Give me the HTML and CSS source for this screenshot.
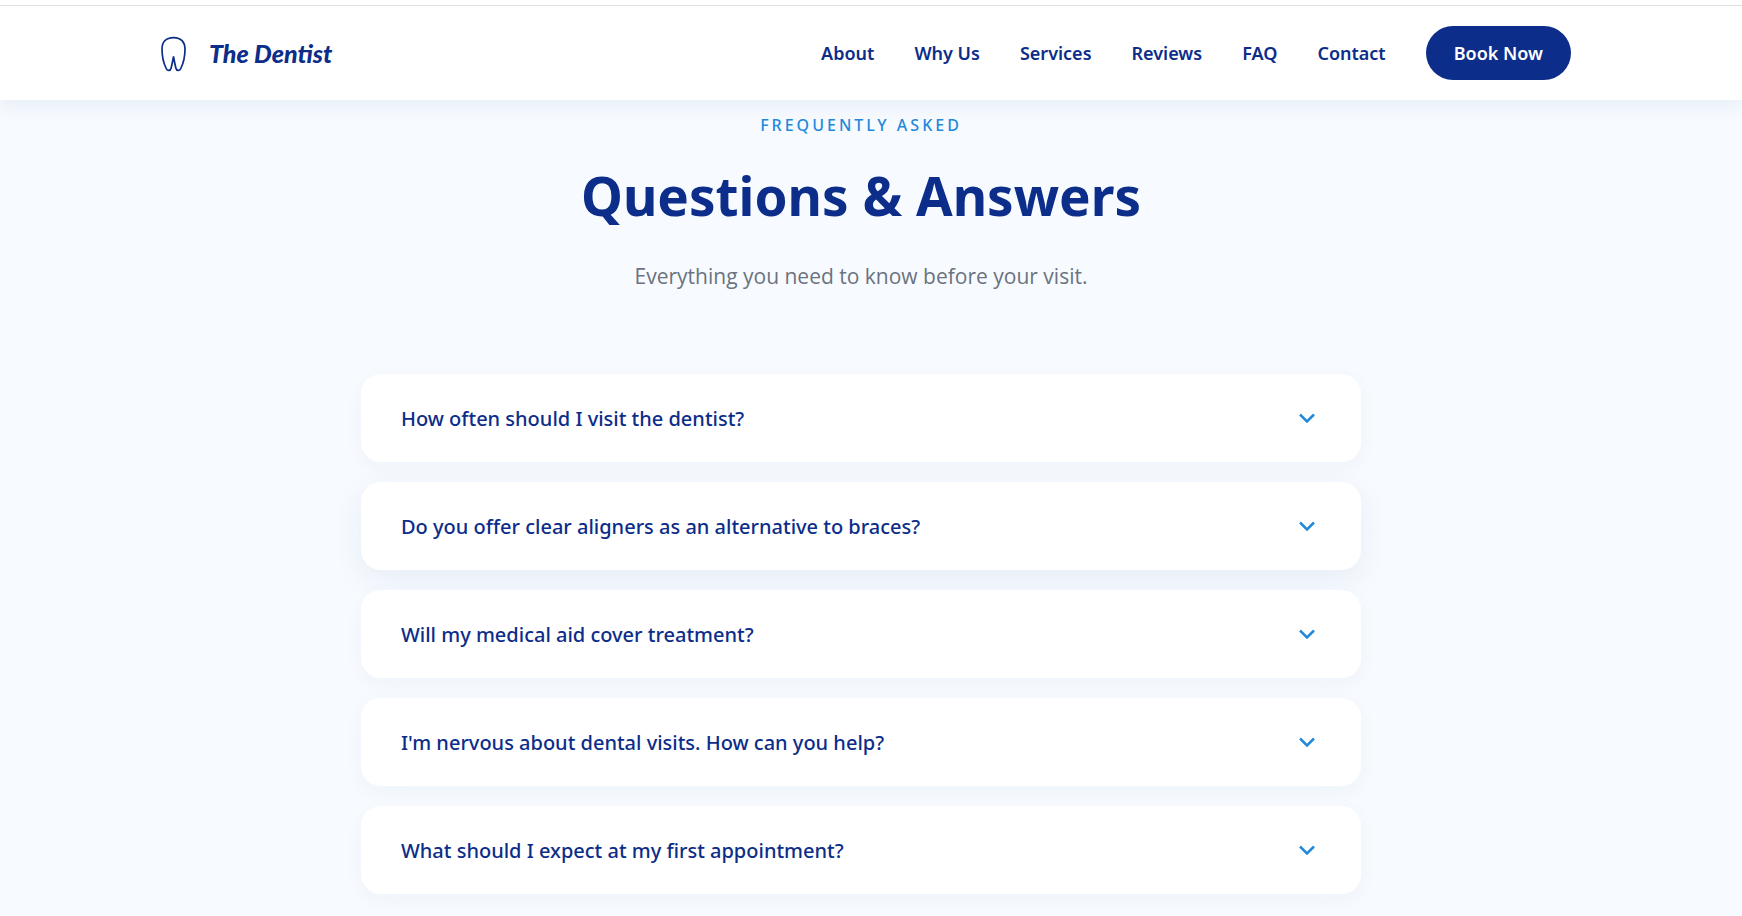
FILE: index.html
```html
<!DOCTYPE html>
<html lang="en">
<head>
    <meta charset="UTF-8">
    <meta name="viewport" content="width=device-width, initial-scale=1.0">
    <title>The Dentist</title>
    <link rel="stylesheet" href="styles.css">
</head>
<body>
    <header class="header">
        <div class="container nav">
            <a href="#home" class="logo">
                <svg class="logo-icon" viewBox="0 0 44 44" aria-hidden="true">
                    <path d="M22.500 6.600C14.500 6.600 11 11.500 11 18C11 24 12.500 32 15.200 37.500C16.200 40 19.400 40 20.100 37.200C21 33.500 21.800 29.500 22.500 25.500C23.200 29.500 24 33.500 24.900 37.200C25.600 40 28.800 40 29.800 37.500C32.500 32 34 24 34 18C34 11.500 30.500 6.600 22.500 6.600Z"/>
                </svg>
                <span class="logo-text">The Dentist</span>
            </a>
            <nav class="nav-links">
                <a href="#about">About</a>
                <a href="#why-us">Why Us</a>
                <a href="#services">Services</a>
                <a href="#reviews">Reviews</a>
                <a href="#faq">FAQ</a>
                <a href="#contact">Contact</a>
                <a href="#book" class="btn">Book Now</a>
            </nav>
        </div>
    </header>

    <main class="faq" id="faq">
        <div class="section-header">
            <span class="section-tag">Frequently Asked</span>
            <h1>Questions &amp; Answers</h1>
            <p>Everything you need to know before your visit.</p>
        </div>

        <div class="faq-list">
            <div class="faq-item">
                <button class="faq-question">
                    <span>How often should I visit the dentist?</span>
                    <svg class="chevron" viewBox="0 0 16 10" aria-hidden="true"><path d="M1 1.500L8 8.500L15 1.500"/></svg>
                </button>
            </div>
            <div class="faq-item active">
                <button class="faq-question">
                    <span>Do you offer clear aligners as an alternative to braces?</span>
                    <svg class="chevron" viewBox="0 0 16 10" aria-hidden="true"><path d="M1 1.500L8 8.500L15 1.500"/></svg>
                </button>
            </div>
            <div class="faq-item">
                <button class="faq-question">
                    <span>Will my medical aid cover treatment?</span>
                    <svg class="chevron" viewBox="0 0 16 10" aria-hidden="true"><path d="M1 1.500L8 8.500L15 1.500"/></svg>
                </button>
            </div>
            <div class="faq-item">
                <button class="faq-question">
                    <span>I'm nervous about dental visits. How can you help?</span>
                    <svg class="chevron" viewBox="0 0 16 10" aria-hidden="true"><path d="M1 1.500L8 8.500L15 1.500"/></svg>
                </button>
            </div>
            <div class="faq-item">
                <button class="faq-question">
                    <span>What should I expect at my first appointment?</span>
                    <svg class="chevron" viewBox="0 0 16 10" aria-hidden="true"><path d="M1 1.500L8 8.500L15 1.500"/></svg>
                </button>
            </div>
        </div>
    </main>
</body>
</html>
```
FILE: styles.css
```css
:root {
    --navy: #0c2d89;
    --blue: #2389da;
    --bg: #f7fbff;
    --gray: #6b7280;
}

* {
    margin: 0;
    padding: 0;
    box-sizing: border-box;
}

body {
    font-family: "Segoe UI", "Noto Sans", "Open Sans", sans-serif;
    background: var(--bg);
    color: var(--navy);
    border-top: 5px solid #fff;
}

a {
    color: inherit;
    text-decoration: none;
}

/* Header */
.header {
    position: relative;
    background: #fff;
    border-top: 1px solid #e0e0e0;
    padding: 20px 20px 20px 0;
    box-shadow: 0 4px 20px rgba(12, 45, 137, 0.08);
}

.container {
    max-width: 1500px;
    margin: 0 auto;
    padding: 0 40px;
}

.nav {
    display: flex;
    align-items: center;
    justify-content: space-between;
}

.logo {
    display: flex;
    align-items: center;
    gap: 14px;
}

.logo-icon {
    width: 44px;
    height: 44px;
    fill: none;
    stroke: var(--navy);
    stroke-width: 1.7;
}

.logo-text {
    font-family: "Brush Script MT", Lato, cursive;
    font-size: 25px;
    font-style: italic;
    font-weight: 900;
}

.nav-links {
    display: flex;
    align-items: center;
    gap: 40px;
    font-size: 18px;
    font-weight: 600;
}

.btn {
    background: var(--navy);
    color: #fff;
    line-height: 24px;
    padding: 15px 28px;
    border-radius: 30px;
}

/* FAQ */
.faq {
    padding: 10px 20px 24px 0;
}

.section-header {
    text-align: center;
    margin-bottom: 80px;
}

.section-tag {
    display: block;
    color: var(--blue);
    font-size: 16px;
    font-weight: 500;
    line-height: 30px;
    letter-spacing: 3px;
    text-transform: uppercase;
}

.section-header h1 {
    font-size: 53px;
    font-weight: 700;
    line-height: 72px;
    margin: 20px 0 26px;
}

.section-header p {
    color: var(--gray);
    font-family: "Segoe UI", "Open Sans", sans-serif;
    font-size: 21px;
    line-height: 36px;
}

.faq-list {
    max-width: 1000px;
    margin: 0 auto;
    display: flex;
    flex-direction: column;
    gap: 20px;
}

.faq-item {
    background: #fff;
    border-radius: 20px;
    box-shadow: 0 5px 20px rgba(12, 45, 137, 0.04);
}

.faq-item.active {
    box-shadow: 0 8px 30px rgba(12, 45, 137, 0.07);
}

.faq-question {
    display: flex;
    align-items: center;
    justify-content: space-between;
    width: 100%;
    padding: 28px 46px 28px 40px;
    border: none;
    background: none;
    color: var(--navy);
    font-family: inherit;
    font-size: 20px;
    font-weight: 500;
    line-height: 30px;
    text-align: left;
    cursor: pointer;
}

.faq-question span {
    padding-top: 2px;
}

.chevron {
    width: 16px;
    height: 10px;
    fill: none;
    stroke: var(--blue);
    stroke-width: 2.5;
}
```
